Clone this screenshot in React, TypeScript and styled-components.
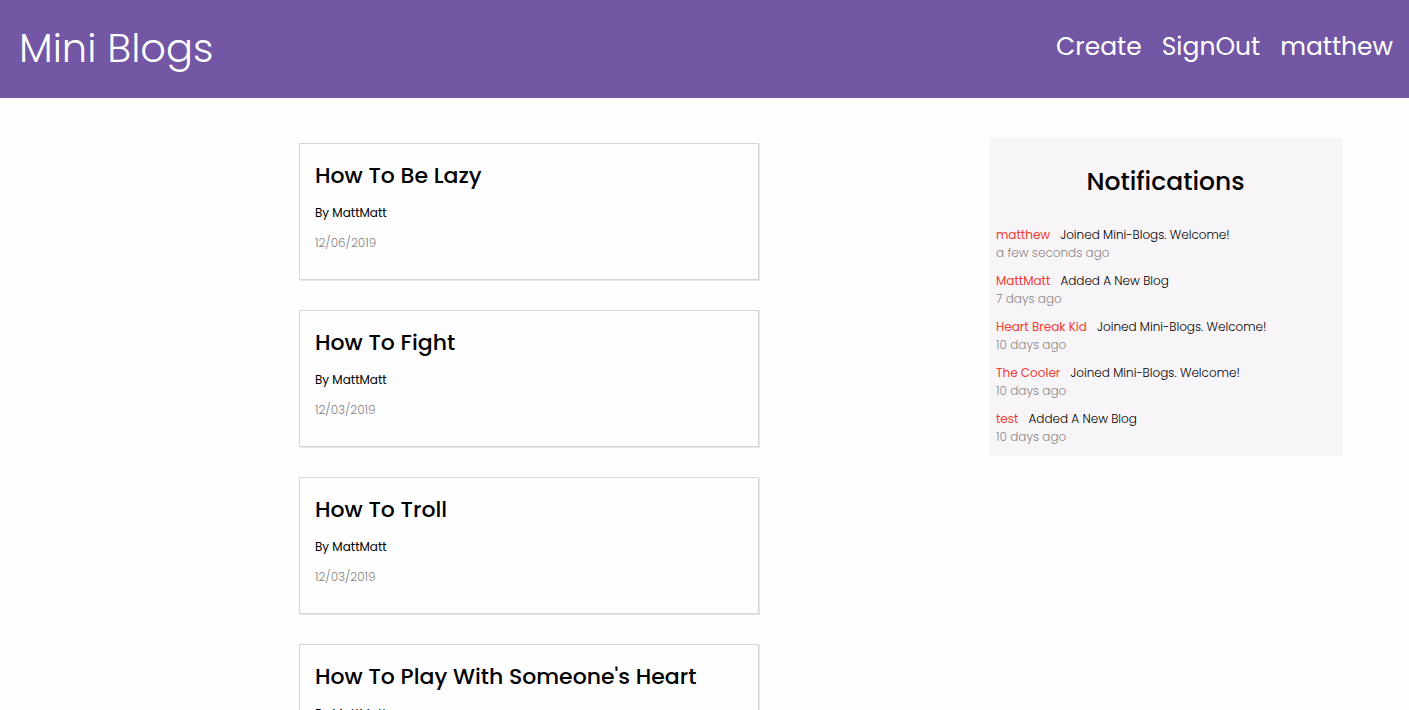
import React from "react";
import styled, { createGlobalStyle } from "styled-components";

const GlobalStyle = createGlobalStyle`
  *, *::before, *::after { box-sizing: border-box; }
  body {
    margin: 0;
    background: #fefefe;
    color: #000;
    font-family: Poppins, Inter, "Liberation Sans", sans-serif;
    font-size: 12px;
    line-height: 18px;
  }
  h1, h2, p, ul { margin: 0; padding: 0; }
  ul { list-style: none; }
  a { color: inherit; text-decoration: none; }
`;

const Header = styled.header`
  display: flex;
  align-items: center;
  justify-content: space-between;
  height: 98px;
  padding: 0 16px 2px 19px;
  background: #7356a4;
  color: #fff;
`;

const Brand = styled.a`
  font-size: 40px;
  font-weight: 300;
  line-height: 60px;
`;

const Nav = styled.nav`
  display: flex;
  gap: 20px;
  padding-bottom: 2px;
  font-size: 25px;
  line-height: 38px;
`;

const Page = styled.div`
  display: flex;
  align-items: flex-start;
  padding: 40px 67px 0 69px;
`;

const Posts = styled.main`
  display: flex;
  flex: 1;
  flex-direction: column;
  align-items: center;
  gap: 30px;
  padding: 5px 0 30px;
`;

const Card = styled.article`
  width: 100%;
  max-width: 460px;
  padding: 15px 15px 27px;
  border: 1px solid #d6d6d6;
  box-shadow: 1px 1px 0 #e6e6e6;
`;

const Title = styled.h2`
  font-size: 22px;
  font-weight: 500;
  line-height: 34px;
`;

const Author = styled.p`
  margin-top: 11px;
`;

const PostDate = styled.p`
  margin-top: 12px;
  color: #808080;
  font-weight: 300;
`;

const Sidebar = styled.aside`
  flex: 0 0 353px;
  padding: 25px 7px 10px;
  background: #f8f5f9;
`;

const SidebarTitle = styled.h2`
  margin-bottom: 25px;
  font-size: 25px;
  font-weight: 500;
  line-height: 38px;
  text-align: center;
`;

const NoticeList = styled.ul`
  display: grid;
  gap: 10px;
`;

const Notice = styled.li`
  font-weight: 300;
`;

const NoticeLine = styled.p`
  display: flex;
  gap: 10px;
`;

const User = styled.span`
  color: #f03c31;
  font-weight: 400;
`;

const Ago = styled.p`
  color: #888588;
`;

const posts = [
  { title: "How To Be Lazy", author: "MattMatt", date: "12/06/2019" },
  { title: "How To Fight", author: "MattMatt", date: "12/03/2019" },
  { title: "How To Troll", author: "MattMatt", date: "12/03/2019" },
  { title: "How To Play With Someone's Heart", author: "MattMatt", date: "12/03/2019" },
];

const notices = [
  { user: "matthew", text: "Joined Mini-Blogs. Welcome!", ago: "a few seconds ago" },
  { user: "MattMatt", text: "Added A New Blog", ago: "7 days ago" },
  { user: "Heart Break Kid", text: "Joined Mini-Blogs. Welcome!", ago: "10 days ago" },
  { user: "The Cooler", text: "Joined Mini-Blogs. Welcome!", ago: "10 days ago" },
  { user: "test", text: "Added A New Blog", ago: "10 days ago" },
];

export default function App() {
  return (
    <>
      <GlobalStyle />
      <Header>
        <Brand href="#home">Mini Blogs</Brand>
        <Nav>
          <a href="#create">Create</a>
          <a href="#signout">SignOut</a>
          <a href="#profile">matthew</a>
        </Nav>
      </Header>
      <Page>
        <Posts>
          {posts.map((post) => (
            <Card key={post.title}>
              <Title><a href="#post">{post.title}</a></Title>
              <Author>By {post.author}</Author>
              <PostDate>{post.date}</PostDate>
            </Card>
          ))}
        </Posts>
        <Sidebar>
          <SidebarTitle>Notifications</SidebarTitle>
          <NoticeList>
            {notices.map((notice) => (
              <Notice key={notice.user}>
                <NoticeLine>
                  <User>{notice.user}</User>
                  <span>{notice.text}</span>
                </NoticeLine>
                <Ago>{notice.ago}</Ago>
              </Notice>
            ))}
          </NoticeList>
        </Sidebar>
      </Page>
    </>
  );
}
